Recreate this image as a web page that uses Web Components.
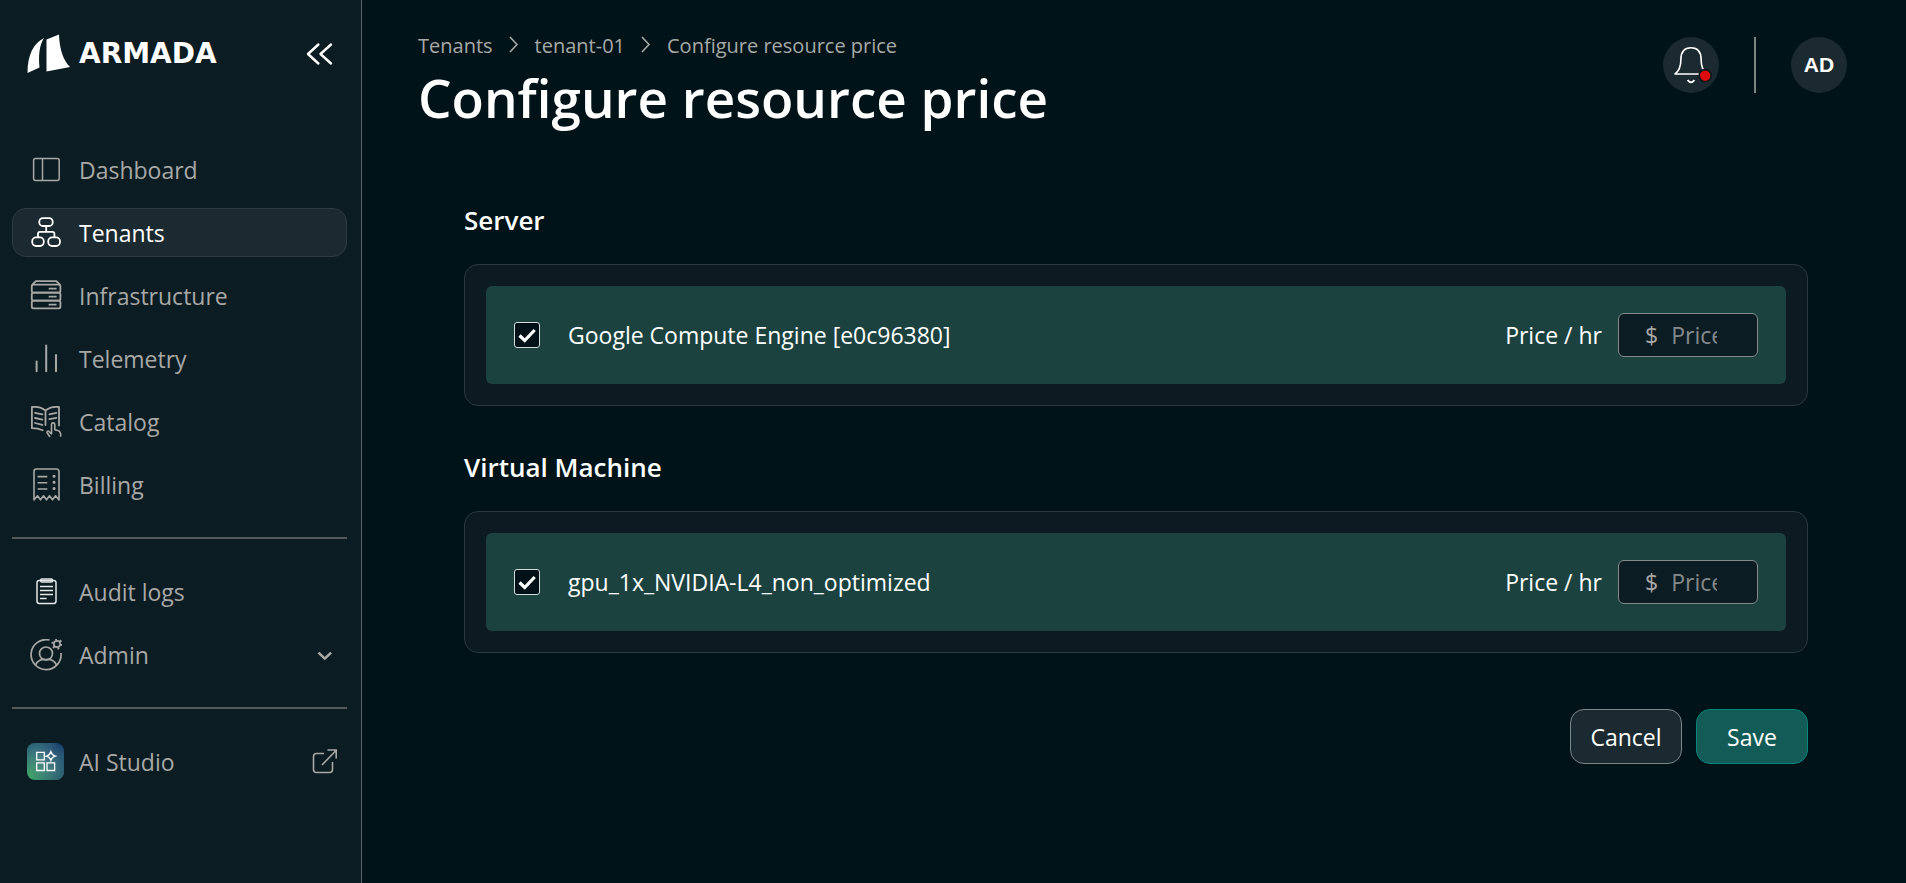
<!DOCTYPE html>
<html lang="en">
<head>
<meta charset="utf-8">
<meta name="viewport" content="width=device-width, initial-scale=1">
<title>Configure resource price</title>
<style>
  :root {
    --bg: #001318;
    --panel: #0b1c22;
    --raised: #1b2a30;
    --muted: #a8a9a7;
    --line: #2d383c;
    --text-m: 23px;
  }
  * { box-sizing: border-box; }
  body {
    margin: 0;
    background: var(--bg);
    color: #fff;
    font: 400 var(--text-m)/32px "Open Sans", "Noto Sans", sans-serif;
  }
</style>
</head>
<body>
<app-shell>
  <side-nav slot="nav">
    <nav-item icon="dashboard">Dashboard</nav-item>
    <nav-item icon="tenants" active>Tenants</nav-item>
    <nav-item icon="servers">Infrastructure</nav-item>
    <nav-item icon="bars">Telemetry</nav-item>
    <nav-item icon="catalog">Catalog</nav-item>
    <nav-item icon="billing">Billing</nav-item>
    <nav-rule></nav-rule>
    <nav-item icon="audit">Audit logs</nav-item>
    <nav-item icon="admin" trailing="chevron-down">Admin</nav-item>
    <nav-rule></nav-rule>
    <nav-item icon="studio" trailing="external">AI Studio</nav-item>
  </side-nav>
  <page-header>Configure resource price</page-header>
  <price-form>
    <resource-section heading="Server">
      <price-row name="Google Compute Engine [e0c96380]"></price-row>
    </resource-section>
    <resource-section heading="Virtual Machine">
      <price-row name="gpu_1x_NVIDIA-L4_non_optimized"></price-row>
    </resource-section>
    <action-button slot="actions">Cancel</action-button>
    <action-button slot="actions" primary>Save</action-button>
  </price-form>
</app-shell>

<script>
const icons = {
  dashboard: [32, 32, `<g fill="none" stroke="currentColor" stroke-width="1.5"><rect x="3.6" y="4.5" width="25.6" height="22" rx="2"/><path d="M12.5 4.500v22"/></g>`],
  tenants: [32, 32, `<g fill="none" stroke="currentColor" stroke-width="1.8"><rect x="9.3" y="1.2" width="13.4" height="7.8" rx="3.6"/><rect x="2.2" y="20.400" width="11.6" height="8.6" rx="3.9"/><rect x="18.2" y="20.400" width="11.8" height="8.6" rx="3.9"/><path d="M16.2 9v6M8 20.400v-3.6a2 2 0 0 1 2-2h12.4a2 2 0 0 1 2 2v3.600"/></g>`],
  servers: [32, 32, `<g fill="none" stroke="currentColor" stroke-width="1.8"><path d="M2 5 5.800 1.200h20.600L30.200 5"/><rect x="1.8" y="4.600" width="28.6" height="8" rx="1.6"/><rect x="1.8" y="12.600" width="28.6" height="8" rx="1.6"/><rect x="1.8" y="20.600" width="28.6" height="7.8" rx="1.6"/><path d="M18.6 8.600h8M18.6 16.600h8M18.6 24.600h8"/></g>`],
  bars: [32, 32, `<path fill="none" stroke="currentColor" stroke-width="2" stroke-linecap="round" d="M6.6 18.400v9.8M16.2 2.600v25.6M26 12v16.2"/>`],
  catalog: [32, 32, `<g transform="translate(0 -1)" fill="none" stroke="currentColor" stroke-width="1.8" stroke-linecap="round" stroke-linejoin="round"><path d="M15.500 5.500V20M15.500 5.500C12 2.800 6.800 1.500 1.900 2v21.200c3.800 0 7.600.6 10.800 2M15.500 5.500C19 2.800 24 1.500 29 2v18.500"/><path d="m5 7.800 7.400 1.600M5 13l7.400 1.600M5 18l7.400 1.800M19.400 9.400 26.400 7.800M19.400 14.200l7-1.400"/><path d="m19.700 31.500-2.600-3.700c-.6-1.200.8-2.400 2-1.200l2.400 2.200V19.400c0-2 3.300-2 3.300 0v5.300l3 .9c2.200.6 3.200 1.800 2.800 5.600" stroke-width="1.6"/></g>`],
  billing: [32, 34, `<g fill="none" stroke="currentColor" stroke-width="1.6" stroke-linejoin="round"><path d="M4 32V3.400A2.400 2.400 0 0 1 6.400 1H26.600A2.400 2.400 0 0 1 29 3.400V32l-3.500-4.200-3 4-3-4-3 4-3-4-3 4-3-4z"/><path d="M7.600 8.600h9.700M7.600 14.800h9.700M7.600 21h9.700"/><path stroke-width="3" stroke-linecap="round" d="M24 8.200h.1M24 14.300h.1M24 20.500h.1"/></g>`],
  audit: [32, 32, `<g fill="none" stroke="#e4e8e8" stroke-width="1.5"><rect x="7" y="4.500" width="19" height="23" rx="2.200"/><rect x="10.600" y="3" width="12" height="3" rx="1.300"/><path d="M10 10.500h13M10 14.500h13M10 18.500h13M10 22.500h6.600"/></g>`],
  admin: [32, 32, `<g fill="none" stroke="currentColor" stroke-width="1.700"><path d="M19.500 1A15 15 0 1 0 31 14"/><circle cx="16" cy="14.500" r="6.500"/><path d="M5.500 26c1.500-4 5.800-6.400 10.500-5.300 4.700-1.100 9 1.300 10.500 5.300"/><circle cx="27" cy="5" r="3.200"/><circle cx="27" cy="5" r="4.500" stroke-dasharray="1.800 2.912" stroke-width="2.200"/></g>`],
  studio: [38, 38, `<defs><linearGradient id="g" x1="0" y1="1" x2="1" y2="0"><stop offset="0" stop-color="#3cae5c"/><stop offset=".5" stop-color="#4c7c84"/><stop offset="1" stop-color="#0c2d66"/></linearGradient><linearGradient id="h" x1="0" y1="0" x2="1" y2="1"><stop offset="0" stop-color="#124d68"/><stop offset=".45" stop-color="#3a8188" stop-opacity=".1"/><stop offset="1" stop-color="#154a5c"/></linearGradient></defs><rect width="37" height="37" rx="8" fill="url(#g)"/><rect width="37" height="37" rx="8" fill="url(#h)" opacity=".75"/><g fill="none" stroke="#fff" stroke-width="1.300"><path d="M9.700 9.300h7.600v7.600H9.700zM9.700 19.900h7.600v7.600H9.700zM20 19.900h7.600v7.600H20zM23.900 8.800q1 3.400 4.300 4.300-3.300.900-4.300 4.300-1-3.400-4.300-4.300 3.300-.900 4.300-4.300z"/></g>`],
  'chevron-down': [24, 24, `<path fill="none" stroke="currentColor" stroke-width="2.600" stroke-linejoin="round" d="m6.500 9.600 6.300 6 6.300-6"/>`],
  external: [28, 28, `<g fill="none" stroke="currentColor" stroke-width="1.600"><path d="M14 5.500H6.500A3 3 0 0 0 3.500 8.500v13a3 3 0 0 0 3 3h13a3 3 0 0 0 3-3V14"/><path d="M12 17 26 2.500M17.500 2H26.200v8.500"/></g>`],
  collapse: [28, 28, `<path fill="none" stroke="#fff" stroke-width="2.400" stroke-linecap="round" stroke-linejoin="round" d="M12.400 4.500 2 14l10.400 9.500M25 4.500 14.500 14 25 23.500"/>`],
  sep: [10, 20, `<path fill="none" stroke="currentColor" stroke-width="1.600" d="m1 1 7 7.500L1 16"/>`],
  bell: [56, 56, `<g fill="none" stroke="#fff" stroke-width="1.600" stroke-linejoin="round"><path d="M12 37c4.800-3.500 5.900-9 5.900-14.500C17.900 15 21.500 10.800 28 10.800S38.100 15 38.100 22.500c0 5.500 1.100 11 5.900 14.500z"/><path stroke-width="2" d="M24.600 43q3.400 4.600 6.800 0"/></g><circle cx="42.200" cy="38.600" r="6" fill="#dc0c0c" stroke="#08161b" stroke-width="1.600"/>`],
  sails: [44, 40, `<path fill="#fff" d="M17 4C7 9 .5 20 .5 39L12.500 33.500C11.500 22 12 12 17 4zM19.500 5.500 32 .5C32.500 15 36 26 43 33L19.500 37.500z"/>`],
};

/* Defines an element whose shadow root is cloned from a template. */
function define(tag, markup, setup) {
  const tpl = document.createElement('template');
  tpl.innerHTML = '<style>*{box-sizing:border-box}</style>' + markup;
  customElements.define(tag, class extends HTMLElement {
    connectedCallback() {
      if (this.shadowRoot) return;
      this.attachShadow({ mode: 'open' }).append(tpl.content.cloneNode(true));
      if (setup) setup(this, this.shadowRoot);
    }
  });
}

define('app-icon', `<style>:host{display:block;flex:none} svg{display:block}</style>`, (el, root) => {
  const [w, h, body] = icons[el.getAttribute('name')];
  root.innerHTML += `<svg width="${w}" height="${h}" viewBox="0 0 ${w} ${h}" aria-hidden="true">${body}</svg>`;
});

define('app-shell', `
<style>
  :host { display: grid; grid-template-columns: 362px minmax(0, 1fr); min-height: 100vh; }
  main { padding: 30px 59px 40px 56px; }
</style>
<slot name="nav"></slot>
<main><slot></slot></main>`);

define('side-nav', `
<style>
  :host { display: block; background: var(--panel); border-right: 1px solid #596468; padding: 26px 14px 26px 12px; }
  header { display: flex; align-items: center; height: 56px; padding: 0 13px 0 15px; margin-bottom: 63px; }
  .brand { display: flex; align-items: center; gap: 8px; flex: 1; color: #fff; text-decoration: none; font: 700 28px/32px "DejaVu Sans", sans-serif; }
  button { border: 0; padding: 0; background: none; cursor: pointer; }
  nav { display: flex; flex-direction: column; gap: 14px; }
</style>
<header>
  <a class="brand" href="#"><app-icon name="sails"></app-icon>ARMADA</a>
  <button aria-label="Collapse menu"><app-icon name="collapse"></app-icon></button>
</header>
<nav><slot></slot></nav>`);

define('nav-rule', `<style>:host{display:block;height:2px;margin:14px 0;background:#535a5c}</style>`);

define('nav-item', `
<style>
  :host { display: block; color: var(--muted); }
  a { display: flex; align-items: center; height: 49px; padding: 0 8px 0 14px; border: 1px solid transparent; border-radius: 14px; color: inherit; text-decoration: none; }
  .lead, .trail { display: flex; justify-content: center; width: 38px; flex: none; }
  .text { flex: 1; padding-left: 14px; }
  :host([active]) { color: #fff; }
  :host([active]) a { background: var(--raised); border-color: #303b40; }
  .trail { width: 28px; }
</style>
<a href="#"><span class="lead"></span><span class="text"><slot></slot></span></a>`, (el, root) => {
  root.querySelector('.lead').innerHTML = `<app-icon name="${el.getAttribute('icon')}"></app-icon>`;
  if (el.hasAttribute('active')) root.querySelector('a').setAttribute('aria-current', 'page');
  if (el.hasAttribute('trailing'))
    root.querySelector('a').insertAdjacentHTML('beforeend', `<span class="trail"><app-icon name="${el.getAttribute('trailing')}"></app-icon></span>`);
});

define('page-header', `
<style>
  :host { display: flex; justify-content: space-between; align-items: flex-start; }
  nav { display: flex; align-items: center; gap: 16px; font-size: 20px; line-height: 32px; color: var(--muted); }
  a { color: inherit; text-decoration: none; }
  h1 { margin: 0; font-size: 53px; line-height: 72px; font-weight: 600; }
  .tools { display: flex; gap: 35px; padding-top: 7px; }
  button { width: 56px; height: 56px; border: 0; border-radius: 50%; padding: 0; background: var(--raised); color: #fff; font: 700 21px/24px "Liberation Sans", Arial, sans-serif; cursor: pointer; }
  hr { margin: 0; width: 2px; height: 56px; border: 0; background: #7d8284; }
</style>
<div>
  <nav aria-label="Breadcrumb">
    <a href="#">Tenants</a><app-icon name="sep"></app-icon>
    <a href="#">tenant-01</a><app-icon name="sep"></app-icon>
    <span>Configure resource price</span>
  </nav>
  <h1><slot></slot></h1>
</div>
<div class="tools">
  <button aria-label="Notifications"><app-icon name="bell"></app-icon></button>
  <hr>
  <button>AD</button>
</div>`);

define('price-form', `
<style>
  :host { display: block; padding: 68px 39px 0 46px; }
  .sections { display: grid; gap: 43px; }
  .actions { display: flex; justify-content: flex-end; gap: 14px; margin-top: 56px; }
</style>
<div class="sections"><slot></slot></div>
<div class="actions"><slot name="actions"></slot></div>`);

define('resource-section', `
<style>
  :host { display: block; }
  h2 { margin: 0 0 26px; font-size: 26px; line-height: 36px; font-weight: 600; }
  .card { padding: 21px; border: 1px solid var(--line); border-radius: 14px; background: #0b1b21; }
</style>
<h2></h2>
<div class="card"><slot></slot></div>`, (el, root) => {
  root.querySelector('h2').textContent = el.getAttribute('heading');
});

define('price-row', `
<style>
  :host { display: flex; align-items: center; min-height: 98px; padding: 0 28px; border-radius: 6px; background: #1c4240; }
  .name { flex: 1; margin-left: 28px; }
  #on { appearance: none; flex: none; width: 26px; height: 26px; margin: 0; border: 1px solid #d5dcdc; border-radius: 3px; background: #001217; }
  #on:checked { background-image: url("data:image/svg+xml,%3Csvg xmlns='http://www.w3.org/2000/svg' viewBox='0 0 24 24'%3E%3Cpath d='M4.500 12.500l5.200 5 10-10.500' fill='none' stroke='white' stroke-width='3.200'/%3E%3C/svg%3E"); }
  .field { display: flex; align-items: center; width: 140px; height: 44px; margin-left: 16px; padding-left: 26px; border: 1px solid #858b8c; border-radius: 6px; background: var(--panel); color: var(--muted); }
  #price { width: 46px; margin-left: 13px; padding: 0; border: 0; outline: 0; background: none; color: #fff; font: inherit; }
  #price::placeholder { color: #848a8c; }
</style>
<input type="checkbox" id="on" checked>
<label class="name" for="on"></label>
<label for="price">Price / hr</label>
<span class="field">$<input type="text" inputmode="decimal" id="price" placeholder="Price"></span>`, (el, root) => {
  root.querySelector('.name').textContent = el.getAttribute('name');
});

define('action-button', `
<style>
  :host { display: block; }
  button { width: 112px; height: 55px; padding: 0; border: 1px solid #7f8688; border-radius: 14px; background: var(--raised); color: #fff; font: inherit; cursor: pointer; }
  :host([primary]) button { background: #135b56; border-color: #00857a; }
</style>
<button type="button"><slot></slot></button>`);
</script>
</body>
</html>
